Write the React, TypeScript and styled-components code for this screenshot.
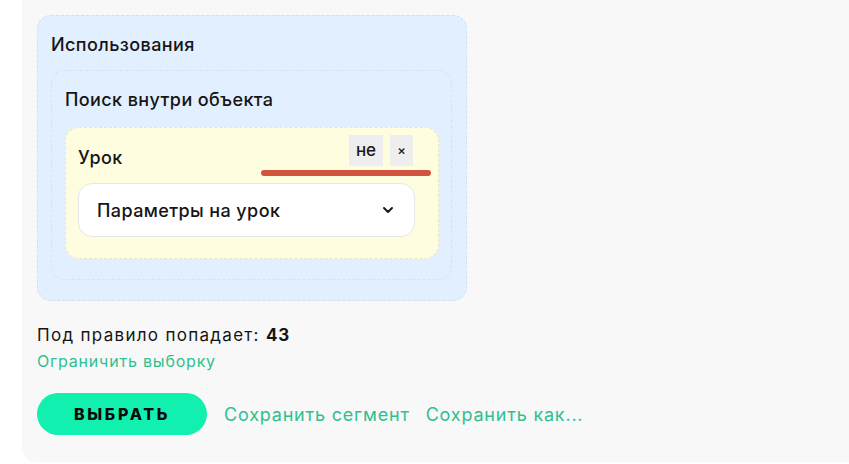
import React from "react";
import styled, { createGlobalStyle } from "styled-components";

const Global = createGlobalStyle`
  html, body { margin: 0; padding: 0; background: #ffffff; }
  body { font-family: Inter, "Noto Sans", sans-serif; color: #1a1a1a; }
`;

const Page = styled.div`
  width: 849px;
  height: 464px;
  overflow: hidden;
  padding-left: 22px;
  box-sizing: border-box;
`;

const Panel = styled.div`
  margin-top: -20px;
  width: 860px;
  height: 482px;
  background: #f8f8f8;
  border-radius: 0 0 0 14px;
  padding: 35px 0 0 15px;
  box-sizing: border-box;
  display: flex;
  flex-direction: column;
`;

const Block = styled.div<{ $bg: string; $border: string }>`
  background: ${(p) => p.$bg};
  border: 1px dashed ${(p) => p.$border};
  border-radius: 14px;
  box-sizing: border-box;
  display: flex;
  flex-direction: column;
`;

const Outer = styled(Block)`
  width: 430px;
  height: 286px;
  padding: 18px 14px 0 13px;
`;

const Inner = styled(Block)`
  height: 210px;
  margin-top: 14px;
  padding: 18px 12px 0 13px;
`;

const Lesson = styled(Block)`
  position: relative;
  height: 132px;
  margin-top: 16px;
  padding: 6px 23px 0 12px;
`;

const Title = styled.div`
  font-size: 18px;
  font-weight: 500;
  line-height: 22px;
  letter-spacing: 0.4px;
  color: #151515;
`;

const LessonHead = styled.div`
  display: flex;
  align-items: center;
  height: 32px;
`;

const LessonTitle = styled(Title)`
  flex: 1;
  padding-top: 15px;
`;

const Chips = styled.div`
  display: flex;
  gap: 7px;
  margin-right: 2px;
`;

const Chip = styled.button<{ $w: number }>`
  width: ${(p) => p.$w}px;
  height: 31px;
  border: none;
  background: #eeeeee;
  font-family: inherit;
  font-weight: 500;
  font-size: ${(p) => (p.$w > 30 ? 17 : 13)}px;
  color: #1a1a1a;
  padding: 0;
  display: flex;
  align-items: center;
  justify-content: center;
`;

const Underline = styled.div`
  position: absolute;
  left: 195px;
  top: 42px;
  width: 170px;
  height: 6px;
  border-radius: 3px;
  background: #d2543f;
`;

const Select = styled.div`
  margin-top: 17px;
  height: 54px;
  background: #ffffff;
  border: 1px solid #e6e6e6;
  border-radius: 14px;
  box-sizing: border-box;
  display: flex;
  align-items: center;
  padding: 0 20px 0 18px;
  font-size: 18px;
  font-weight: 500;
  letter-spacing: 0.4px;
  color: #151515;
`;

const SelectText = styled.span`
  flex: 1;
`;

const Count = styled.div`
  margin-top: 23px;
  font-size: 17px;
  line-height: 22px;
  letter-spacing: 1.3px;
  color: #151515;
  b { font-weight: 700; letter-spacing: 0.8px; }
`;

const LinkText = styled.a<{ $size: number }>`
  color: #2fc08f;
  font-size: ${(p) => p.$size}px;
  letter-spacing: 0.8px;
  text-decoration: none;
  cursor: pointer;
`;

const Limit = styled(LinkText)`
  margin-top: 5px;
  line-height: 20px;
`;

const Actions = styled.div`
  margin-top: 22px;
  display: flex;
  align-items: center;
  gap: 16px;
`;

const Primary = styled.button`
  width: 170px;
  height: 42px;
  border: none;
  border-radius: 21px;
  background: #12f0b0;
  font-family: inherit;
  font-weight: 800;
  font-size: 16px;
  letter-spacing: 2.7px;
  color: #0a0a0a;
  margin-right: 1px;
`;

const Chevron = () => (
  <svg width="12" height="8" viewBox="0 0 12 8">
    <path d="M2 2l4 4 4-4" fill="none" stroke="#1a1a1a" strokeWidth="2" strokeLinecap="round" strokeLinejoin="round" />
  </svg>
);

export default function App() {
  return (
    <Page>
      <Global />
      <Panel>
        <Outer $bg="#e2effe" $border="#d3e1ef">
          <Title>Использования</Title>
          <Inner $bg="transparent" $border="#d6e2ee">
            <Title>Поиск внутри объекта</Title>
            <Lesson $bg="#fffde0" $border="#e9e6c8">
              <LessonHead>
                <LessonTitle>Урок</LessonTitle>
                <Chips>
                  <Chip $w={34}>не</Chip>
                  <Chip $w={23}>×</Chip>
                </Chips>
              </LessonHead>
              <Underline />
              <Select>
                <SelectText>Параметры на урок</SelectText>
                <Chevron />
              </Select>
            </Lesson>
          </Inner>
        </Outer>
        <Count>
          Под правило попадает: <b>43</b>
        </Count>
        <Limit $size={16}>Ограничить выборку</Limit>
        <Actions>
          <Primary>ВЫБРАТЬ</Primary>
          <LinkText $size={18}>Сохранить сегмент</LinkText>
          <LinkText $size={18}>Сохранить как...</LinkText>
        </Actions>
      </Panel>
    </Page>
  );
}
